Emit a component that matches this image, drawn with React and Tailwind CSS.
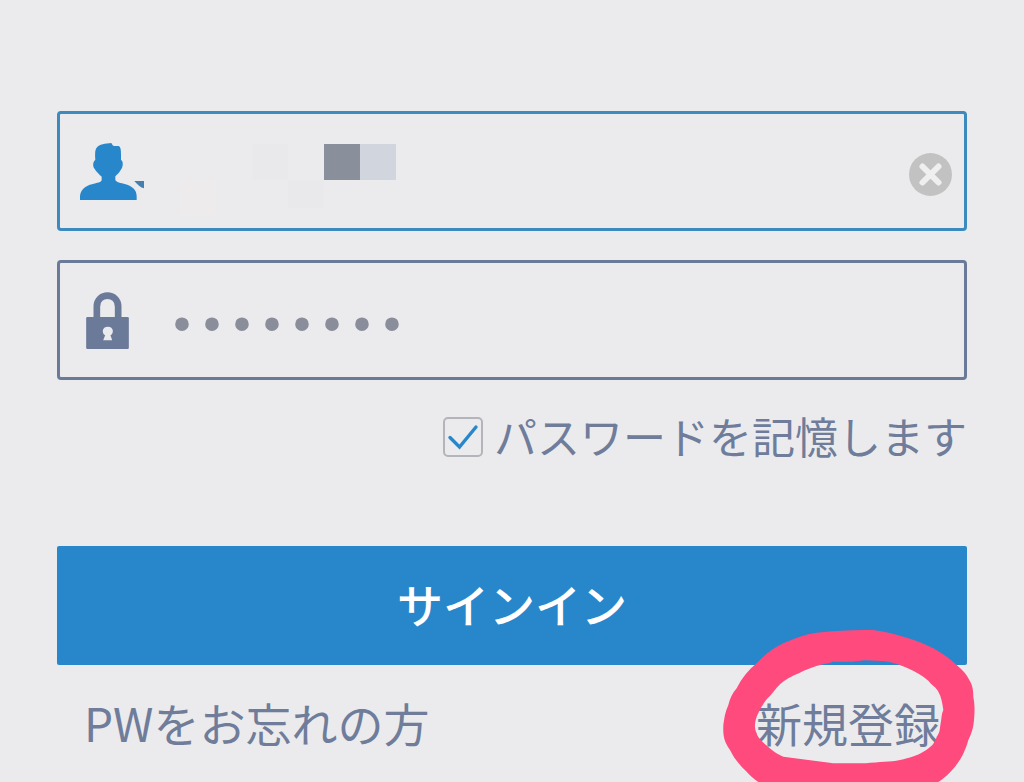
import { useState } from "react"

function UserIcon() {
  return (
    <svg viewBox="0 0 192 171" className="h-[57px] w-[64px] shrink-0" aria-hidden="true">
      <path
        fill="#2887cb"
        d="M0 171V158C3 138 18 128 36 124C52 119 64 118 65 111V101C56 93 49 86 44 78C38 72 38 60 43 53L46 51C45 32 45 20 50 14C58 4 76 1 94 0L98 7L102 9H116C122 12 123 20 123 34V51C130 54 130 70 124 78C119 88 112 94 106 100V110C108 118 122 119 137 124C156 130 170 140 170 160V171Z"
      />
      <path fill="#457fae" d="M163 114H192V136C182 134 172 125 163 114Z" />
    </svg>
  )
}

function LockIcon() {
  return (
    <svg viewBox="0 0 128 171" className="h-[57px] w-[43px] shrink-0" aria-hidden="true">
      <path fill="none" stroke="#6b7a99" strokeWidth="20" d="M32 80V44C32 0 96 0 96 44V80" />
      <rect y="75" width="128" height="96" rx="4" fill="#6b7a99" />
      <path fill="#ebebed" d="M57 130C46 124 47 104 65 104C83 104 84 124 73 130L78 145H51Z" />
    </svg>
  )
}

// hand-drawn marker ring round the sign-up link
function MarkerRing() {
  return (
    <svg
      viewBox="60 48 780 522"
      className="pointer-events-none absolute -top-[66px] -left-[36px] h-[174px] w-[260px] max-w-none"
      aria-hidden="true"
    >
      <path
        fill="#ff4a7d"
        fillRule="evenodd"
        d="M495 60C530 58 560 66 600 77C640 88 670 99 700 115C728 131 750 146 770 165C788 180 800 193 808 210C818 225 820 242 820 262C825 285 824 307 822 330C820 355 814 372 805 390C795 425 783 448 765 470C747 492 735 502 715 516C670 552 600 562 495 564H375C280 558 225 548 175 516C160 506 150 496 140 485C118 465 101 443 90 420C76 400 68 385 70 345C73 325 75 306 85 285C90 265 97 250 110 235C125 205 145 180 170 160C195 133 220 114 250 100C285 84 315 73 350 68C400 62 450 61 495 60Z
        M385 160C350 166 325 176 300 188C275 198 255 208 240 223C225 238 215 255 200 268C184 288 176 306 170 320C163 340 163 355 170 370C172 380 178 386 188 396C205 412 225 430 250 440C300 447 350 453 400 460H495C540 455 570 456 600 450C630 443 650 437 670 425C692 412 705 400 710 380C721 367 719 355 722 340C725 325 724 312 730 300C727 280 724 260 715 245C708 231 695 225 685 212C665 195 645 183 620 173C590 160 570 155 545 153L495 151L455 155H400Z"
      />
    </svg>
  )
}

function App() {
  const [user, setUser] = useState("")
  const [password, setPassword] = useState("password")
  const [remember, setRemember] = useState(true)

  return (
    <div className="min-h-screen overflow-hidden bg-[#ebebed] px-[57px] pt-[111px] font-['Noto_Sans_CJK_JP',sans-serif] text-[#6f7d9b]">
      <form onSubmit={(e) => e.preventDefault()}>
        <div className="flex h-[120px] items-center rounded-[4px] border-3 border-[#3d8abf] pr-3 pl-5">
          <UserIcon />
          <div className="ml-9 flex items-start pt-[18px]" aria-hidden="true">
            <div className="mt-9 h-9 w-9 bg-[#eeebed]" />
            <div className="w-9" />
            <div className="h-9 w-9 bg-[#e9e9eb]" />
            <div className="mt-9 h-7 w-9 bg-[#e9e9eb]" />
            <div className="h-9 w-9 bg-[#8a909b]" />
            <div className="h-9 w-9 bg-[#d1d5dd]" />
          </div>
          <input
            type="text"
            aria-label="ユーザー名"
            value={user}
            onChange={(e) => setUser(e.target.value)}
            className="min-w-0 flex-1 bg-transparent text-[42px] outline-none"
          />
          <button type="button" aria-label="クリア" onClick={() => setUser("")} className="mt-1.5 shrink-0">
            <svg viewBox="0 0 43 43" className="size-[43px]" aria-hidden="true">
              <circle cx="21.5" cy="21.5" r="21.5" fill="#c2c2c2" />
              <path d="M13.5 13.5L29.5 29.5M29.5 13.5L13.5 29.5" stroke="#efefef" strokeWidth="6" strokeLinecap="round" />
            </svg>
          </button>
        </div>

        <div className="mt-[29px] flex h-[120px] items-center rounded-[4px] border-3 border-[#6b7a99] pr-3 pl-[26px]">
          <LockIcon />
          <input
            type="password"
            aria-label="パスワード"
            value={password}
            onChange={(e) => setPassword(e.target.value)}
            className="ml-[38px] min-w-0 flex-1 bg-transparent pt-[14px] font-['Liberation_Mono',monospace] text-[50px] text-[#8a8e9b] outline-none"
          />
        </div>

        <div className="mt-[25px] flex h-[60px] items-center justify-end gap-[11px]">
          <span className="relative mt-1 flex">
            <input
              id="remember"
              type="checkbox"
              checked={remember}
              onChange={(e) => setRemember(e.target.checked)}
              className="size-10 appearance-none rounded-[5px] border-2 border-[#b3b5ba]"
            />
            {remember && (
              <svg viewBox="0 0 40 40" className="pointer-events-none absolute inset-0" aria-hidden="true">
                <path d="M7 20.5L16.5 30L33 10" fill="none" stroke="#2887cb" strokeWidth="3.4" strokeLinecap="round" />
              </svg>
            )}
          </span>
          <label htmlFor="remember" className="text-[43px] leading-[60px] whitespace-nowrap">
            パスワードを記憶します
          </label>
        </div>

        <button
          type="submit"
          className="mt-[81px] h-[119px] w-full rounded-[2px] bg-[#2887cb] pb-1 text-[46px] font-medium text-white"
        >
          サインイン
        </button>
      </form>

      <div className="flex items-center justify-between px-[27px] pt-[27px] text-[46px] leading-[60px]">
        <a href="#forgot">PWをお忘れの方</a>
        <a href="#register" className="relative">
          新規登録
          <MarkerRing />
        </a>
      </div>
    </div>
  )
}

export default App
